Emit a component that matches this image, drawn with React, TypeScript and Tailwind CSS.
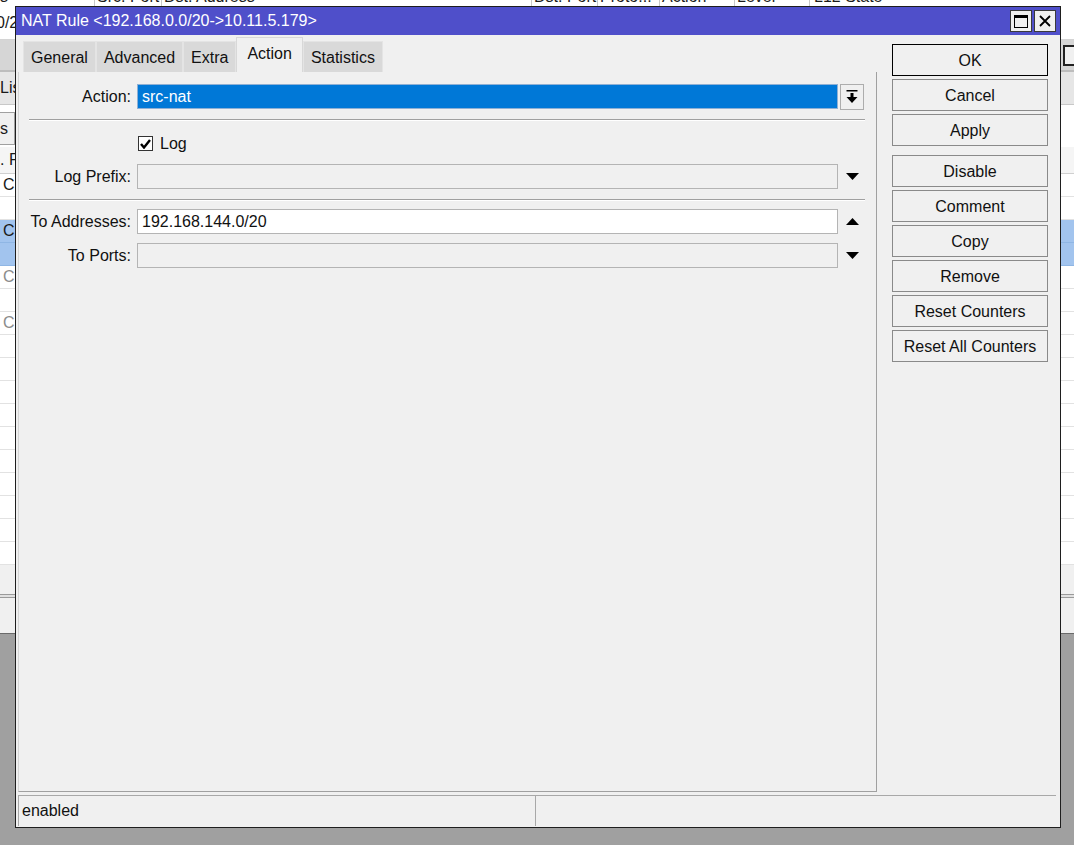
import React from "react";

const tabs = [
  { label: "General" },
  { label: "Advanced" },
  { label: "Extra" },
  { label: "Action", active: true },
  { label: "Statistics" },
];

const buttons = [
  { label: "OK", primary: true },
  { label: "Cancel" },
  { label: "Apply", gapAfter: true },
  { label: "Disable" },
  { label: "Comment" },
  { label: "Copy" },
  { label: "Remove" },
  { label: "Reset Counters" },
  { label: "Reset All Counters" },
];

const TriangleDown = () => (
  <svg width="13" height="7" viewBox="0 0 13 7">
    <polygon points="0,0 13,0 6.5,7" fill="#000" />
  </svg>
);

const TriangleUp = () => (
  <svg width="13" height="7" viewBox="0 0 13 7">
    <polygon points="0,7 13,7 6.5,0" fill="#000" />
  </svg>
);

const DropIcon = () => (
  <svg width="12" height="14" viewBox="0 0 12 14">
    <rect x="0.5" y="0" width="11" height="1.5" fill="#000" />
    <rect x="4.5" y="3" width="3" height="4" fill="#000" />
    <polygon points="0.5,7 11.5,7 6,13" fill="#000" />
  </svg>
);

const FieldRow = ({
  label,
  children,
  side,
  className = "",
}: {
  label?: string;
  children: React.ReactNode;
  side?: React.ReactNode;
  className?: string;
}) => (
  <div className={`flex h-[25px] items-center ${className}`}>
    <div className="flex w-[104px] shrink-0 justify-end whitespace-nowrap pt-[1px]">{label}</div>
    <div className="ml-[6px] h-full w-[701px] shrink-0">{children}</div>
    <div className="ml-[2px] flex h-full w-[24px] shrink-0 items-center justify-center">{side}</div>
  </div>
);

const Separator = ({ className = "" }: { className?: string }) => (
  <div className={`ml-[2px] w-[836px] border-t border-b border-t-[#a0a0a0] border-b-white ${className}`} />
);

// clip the texts of the back window to the strip that shows beside the dialog
const Edge = ({ children, className = "" }: { children: React.ReactNode; className?: string }) => (
  <div className={`w-[15px] overflow-hidden whitespace-nowrap ${className}`}>{children}</div>
);

// the window behind the dialog, only its edges show
const Background = () => {
  const rows = Array.from({ length: 17 }, (_, i) => i);
  return (
    <div className="flex flex-col bg-white text-[16px] text-[#1a1a1a]">
      <div className="h-[6px] overflow-hidden">
        <div className="-mt-[13px] flex h-[19px] items-center whitespace-nowrap">
          <div className="w-[95px] border-r border-[#c8c8c8]">s</div>
          <div className="w-[67px] border-r border-[#c8c8c8] pl-[2px]">Src. Port</div>
          <div className="w-[370px] border-r border-[#c8c8c8] pl-[2px]">Dst. Address</div>
          <div className="w-[66px] border-r border-[#c8c8c8] pl-[2px]">Dst. Port</div>
          <div className="w-[62px] border-r border-[#c8c8c8] pl-[2px]">Proto...</div>
          <div className="w-[75px] border-r border-[#c8c8c8] pl-[2px]">Action</div>
          <div className="w-[75px] border-r border-[#c8c8c8] pl-[2px]">Level</div>
          <div className="pl-[4px]">L12 State</div>
        </div>
      </div>
      <div className="flex h-[34px] items-center border-b border-[#d4d4d4]">
        <Edge>
          <span className="-ml-[4px]">0/20</span>
        </Edge>
      </div>
      <div className="flex h-[30px] items-center bg-[#d6d6d6]">
        <div className="-mr-[9px] ml-auto h-[21px] w-[20px] border-2 border-[#222] bg-[#f0f0f0]" />
      </div>
      <div className="h-[2px] bg-[#bdbdbd]" />
      <div className="flex h-[33px] items-center border-b border-[#c8c8c8] bg-[#e6e6e6]">
        <Edge>List</Edge>
      </div>
      <div className="h-[42px] pt-[7px]">
        <div className="flex h-[33px] w-[15px] items-center overflow-hidden border-y border-r border-[#a0a0a0] bg-[#f0f0f0]">
          <span>s</span>
        </div>
      </div>
      <div className="flex h-[27px] items-center border-b border-[#d0d0d0] bg-[#f5f5f5]">
        <Edge>. F</Edge>
      </div>
      {rows.map((i) => (
        <div
          key={i}
          className={`flex h-[23px] items-center border-b ${
            i === 2 || i === 3 ? "border-[#8fb6e4] bg-[#a2c4ee]" : "border-[#e2e2e2]"
          }`}
        >
          {i === 0 || i === 2 ? <Edge className="pl-[3px]">C</Edge> : null}
          {i === 4 || i === 6 ? <Edge className="pl-[3px] text-[#8c8c8c]">C</Edge> : null}
        </div>
      ))}
      <div className="h-[29px] bg-[#f0f0f0]" />
      <div className="h-[4px] border-y border-[#9a9a9a] bg-[#e0e0e0]" />
      <div className="h-[36px] border-b border-[#6a6a6a] bg-[#f0f0f0]" />
    </div>
  );
};

const NatDialog = () => (
  <div className="absolute left-[15px] top-[6px] flex h-[822px] w-[1046px] flex-col border border-[#1e1e1e] bg-[#f0f0f0] text-[16px] text-[#111]">
    {/* title bar */}
    <div className="flex h-[28px] shrink-0 items-center bg-[#4f4fca] pl-[5px] pr-[4px]">
      <span className="whitespace-nowrap text-white">NAT Rule &lt;192.168.0.0/20-&gt;10.11.5.179&gt;</span>
      <div className="ml-auto flex gap-[2px]">
        <div className="flex h-[22px] w-[22px] items-center justify-center border border-[#3a3a3a] bg-[#f0f0f0]">
          <svg width="14" height="13" viewBox="0 0 14 13">
            <rect x="0.5" y="0.5" width="13" height="12" fill="none" stroke="#000" />
            <rect x="0.5" y="0.5" width="13" height="2.5" fill="#000" />
          </svg>
        </div>
        <div className="flex h-[22px] w-[22px] items-center justify-center border border-[#3a3a3a] bg-[#f0f0f0]">
          <svg width="12" height="12" viewBox="0 0 12 12">
            <path d="M1 1 L11 11 M11 1 L1 11" stroke="#000" strokeWidth="1.8" />
          </svg>
        </div>
      </div>
    </div>

    {/* main area */}
    <div className="flex min-h-0 flex-1 pl-[2px]">
      <div className="flex w-[859px] shrink-0 flex-col">
        <div className="flex h-[37px] shrink-0 items-end pl-[5px]">
          {tabs.map((t) =>
            t.active ? (
              <div
                key={t.label}
                className="flex h-[35px] items-center border-x border-t border-[#d8d8d8] bg-[#f0f0f0] px-[10px] pb-[2px]"
              >
                {t.label}
              </div>
            ) : (
              <div
                key={t.label}
                className="flex h-[31px] items-center border-x border-t border-[#e4e4e4] bg-[#d9d9d9] px-[7px] pt-[1px]"
              >
                {t.label}
              </div>
            )
          )}
        </div>
        <div className="flex-1 border-b border-l border-r border-b-[#a0a0a0] border-l-[#d4d4d4] border-r-[#a0a0a0] pl-[8px] pt-[12px]">
          <FieldRow
            label="Action:"
            side={
              <div className="flex h-[26px] w-[24px] items-center justify-center border border-[#adadad] bg-[#f0f0f0]">
                <DropIcon />
              </div>
            }
          >
            <div className="flex h-full items-center border border-[#8fb0d4] bg-[#0078d7] pl-[4px] pt-[1px] text-white">
              src-nat
            </div>
          </FieldRow>

          <Separator className="mt-[10px]" />

          <div className="mt-[14px] flex h-[17px] items-center">
            <div className="ml-[111px] flex h-[15px] w-[15px] items-center justify-center border border-[#333] bg-white">
              <svg width="11" height="10" viewBox="0 0 11 10">
                <path d="M1 5 L4 8.5 L10 1" fill="none" stroke="#000" strokeWidth="2.4" />
              </svg>
            </div>
            <span className="ml-[7px]">Log</span>
          </div>

          <FieldRow label="Log Prefix:" className="mt-[12px]" side={<TriangleDown />}>
            <div className="h-full border border-[#b4b4b4] bg-[#f0f0f0]" />
          </FieldRow>

          <Separator className="mt-[10px]" />

          <FieldRow label="To Addresses:" className="mt-[8px]" side={<TriangleUp />}>
            <div className="flex h-full items-center border border-[#b4b4b4] bg-white pl-[4px] pt-[1px]">
              192.168.144.0/20
            </div>
          </FieldRow>

          <FieldRow label="To Ports:" className="mt-[9px]" side={<TriangleDown />}>
            <div className="h-full border border-[#b4b4b4] bg-[#f0f0f0]" />
          </FieldRow>
        </div>
      </div>

      <div className="ml-[15px] flex w-[156px] shrink-0 flex-col gap-[3px] pt-[9px]">
        {buttons.map((b) => (
          <div
            key={b.label}
            className={`flex h-[32px] items-center justify-center border bg-[#f0f0f0] pt-[1px] whitespace-nowrap ${
              b.primary ? "border-[#000]" : "border-[#8a8a8a]"
            } ${b.gapAfter ? "mb-[6px]" : ""}`}
          >
            {b.label}
          </div>
        ))}
      </div>
    </div>

    {/* status bar */}
    <div className="mb-[1px] ml-[2px] mt-[3px] flex h-[31px] w-[1038px] shrink-0 border-t border-[#a8a8a8]">
      <div className="flex w-[518px] items-center border-l border-r border-[#a8a8a8] pl-[3px]">enabled</div>
      <div className="flex-1" />
    </div>
  </div>
);

export default function App() {
  return (
    <div className="relative h-[845px] w-[1074px] overflow-hidden bg-[#a0a0a0] font-['Liberation_Sans',Arial,sans-serif]">
      <Background />
      <NatDialog />
    </div>
  );
}
